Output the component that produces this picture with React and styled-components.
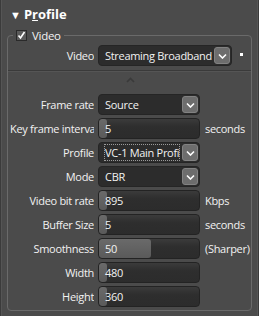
import React from "react";
import styled, { createGlobalStyle } from "styled-components";

const Global = createGlobalStyle`
  html, body {
    margin: 0;
    padding: 0;
    background: #4b4b4b;
  }
  body {
    font-family: "Open Sans", "Noto Sans", sans-serif;
    font-size: 11px;
    letter-spacing: -0.3px;
    color: #f2f2f2;
  }
`;

const Panel = styled.div`
  width: 259px;
  height: 316px;
  box-sizing: border-box;
  background: #4b4b4b;
  border-left: 1px solid #3b3b3b;
  border-right: 1px solid #3b3b3b;
  box-shadow: inset 1px 0 0 #555, inset -1px 0 0 #555;
  overflow: hidden;
`;

const Header = styled.div`
  height: 28px;
  display: flex;
  align-items: center;
  padding-left: 9px;
  gap: 3px;
  font-size: 13px;
  font-weight: 700;
  letter-spacing: 0;
  color: #ffffff;
`;

const Triangle = styled.span`
  font-size: 11px;
  line-height: 1;
`;

const Group = styled.fieldset`
  margin: 0 6px 0 6px;
  padding: 0 0 3px 0;
  border: 1px solid #6a6a6a;
  border-radius: 4px;
  min-width: 0;
`;

const Legend = styled.legend`
  margin-left: 5px;
  padding: 0 3px;
  display: flex;
  align-items: center;
  gap: 5px;
  font-size: 11.5px;
  height: 14px;
`;

const Check = styled.span`
  width: 11px;
  height: 11px;
  box-sizing: border-box;
  border: 1px solid #2a2a2a;
  background: #5a5a5a;
  display: flex;
  align-items: center;
  justify-content: center;
`;

const Row = styled.div`
  display: flex;
  align-items: center;
  height: 21px;
  margin-top: ${(p) => p.$top ?? 3}px;
`;

const Label = styled.div`
  width: 86px;
  padding-left: 2px;
  box-sizing: border-box;
  white-space: nowrap;
  overflow: hidden;
  direction: ${(p) => (p.$clip ? "ltr" : "rtl")};
  text-align: right;
  margin-right: 4px;
`;

const Select = styled.div`
  width: ${(p) => p.$w}px;
  height: 21px;
  box-sizing: border-box;
  background: #2c2c2c;
  border: 1px solid #252525;
  border-radius: 4px;
  display: flex;
  align-items: center;
  padding: 0 1px 0 5px;
`;

const SelectText = styled.span`
  flex: 1;
  white-space: nowrap;
  overflow: hidden;
  padding: 1px 1px;
  outline: ${(p) => (p.$focus ? "1px dotted #9a9a9a" : "none")};
  outline-offset: -1px;
`;

const DropBtn = styled.span`
  width: 16px;
  height: 17px;
  box-sizing: border-box;
  background: #6d6d6d;
  border: 1px solid #828282;
  border-radius: 3px;
  display: flex;
  align-items: center;
  justify-content: center;
  margin-left: 2px;
`;

const Slider = styled.div`
  position: relative;
  width: 102px;
  height: 21px;
  box-sizing: border-box;
  background: linear-gradient(#3b3b3b, #2e2e2e 40%, #2c2c2c);
  border: 1px solid #232323;
  border-radius: 4px;
  overflow: hidden;
  display: flex;
  align-items: center;
`;

const Fill = styled.div`
  position: absolute;
  left: 0;
  top: 0;
  bottom: 0;
  background: linear-gradient(#6a6a6a, #5a5a5a);
  border-radius: 3px;
`;

const Value = styled.span`
  position: relative;
  padding-left: 6px;
`;

const Unit = styled.span`
  margin-left: 5px;
`;

const Marker = styled.span`
  width: 3px;
  height: 3px;
  background: #ffffff;
  margin-left: 8px;
  margin-top: -3px;
`;

const Divider = styled.div`
  margin-top: 4px;
  height: 1px;
  background: #3a3a3a;
  box-shadow: 0 1px 0 #555;
`;

const Collapse = styled.div`
  height: 22px;
  display: flex;
  justify-content: center;
  padding-top: 6px;
  box-sizing: border-box;
  padding-left: 2px;
`;

const Chevron = ({ up, color = "#fff" }) => (
  <svg width="9" height="6" viewBox="0 0 9 6">
    <path
      d={up ? "M1 5 L4.5 1.5 L8 5" : "M1 1.5 L4.5 5 L8 1.5"}
      fill="none"
      stroke={color}
      strokeWidth="1.6"
    />
  </svg>
);

const Dropdown = ({ w, text, focus }) => (
  <Select $w={w}>
    <SelectText $focus={focus}>{text}</SelectText>
    <DropBtn>
      <Chevron />
    </DropBtn>
  </Select>
);

const NumField = ({ value, fill = 8 }) => (
  <Slider>
    <Fill style={{ width: fill }} />
    <Value>{value}</Value>
  </Slider>
);

const App = () => {
  return (
    <Panel>
      <Global />
      <Header>
        <Triangle>▼</Triangle>
        <span>
          P<u>r</u>ofile
        </span>
      </Header>
      <Group>
        <Legend>
          <Check>
            <svg width="9" height="9" viewBox="0 0 9 9">
              <path d="M1.5 4.5 L3.5 7 L7.5 1" fill="none" stroke="#fff" strokeWidth="1.6" />
            </svg>
          </Check>
          <span>Video</span>
        </Legend>
        <Row $top={3}>
          <Label>Video</Label>
          <Dropdown w={134} text="Streaming Broadband" />
          <Marker />
        </Row>
        <Divider />
        <Collapse>
          <Chevron up color="#3a3a3a" />
        </Collapse>
        <Row $top={1}>
          <Label>Frame rate</Label>
          <Dropdown w={102} text="Source" />
        </Row>
        <Row>
          <Label $clip>Key frame interval</Label>
          <NumField value="5" />
          <Unit>seconds</Unit>
        </Row>
        <Row>
          <Label>Profile</Label>
          <Dropdown w={102} text="VC-1 Main Profile" focus />
        </Row>
        <Row>
          <Label>Mode</Label>
          <Dropdown w={102} text="CBR" />
        </Row>
        <Row>
          <Label>Video bit rate</Label>
          <NumField value="895" />
          <Unit>Kbps</Unit>
        </Row>
        <Row>
          <Label>Buffer Size</Label>
          <NumField value="5" />
          <Unit>seconds</Unit>
        </Row>
        <Row>
          <Label>Smoothness</Label>
          <NumField value="50" fill={52} />
          <Unit>(Sharper)</Unit>
        </Row>
        <Row>
          <Label>Width</Label>
          <NumField value="480" />
        </Row>
        <Row>
          <Label>Height</Label>
          <NumField value="360" />
        </Row>
      </Group>
    </Panel>
  );
};

export default App;
